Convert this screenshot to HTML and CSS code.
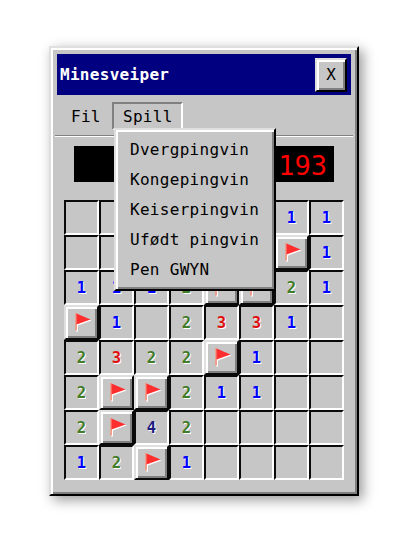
FILE: index.html
```
<!DOCTYPE html>
<html lang="no">
<head>
<meta charset="utf-8">
<title>Minesveiper</title>
<link rel="stylesheet" href="styles.css">
</head>
<body>
<main class="window raised">
  <header class="titlebar"><h1>Minesveiper</h1><button class="close raised">X</button></header>
  <nav class="menubar">
    <div class="menu">Fil</div>
    <div class="menu open">Spill
      <ul class="dropdown raised">
        <li>Dvergpingvin</li><li>Kongepingvin</li><li>Keiserpingvin</li><li>Ufødt pingvin</li><li>Pen GWYN</li>
      </ul>
    </div>
  </nav>
  <div class="display">193</div>
  <div class="board" id="board"></div>
</main>
<script src="board.js"></script>
</body>
</html>
```
FILE: styles.css
```
* { box-sizing: border-box; }
body {
  margin: 0;
  min-height: 559px;
  padding: 46px 0 0 49px;
  background: #fff;
  color: #000;
  font: 16px/30px "DejaVu Sans Mono", monospace;
}
.raised {
  background: #c6c6c6;
  border: 2px solid;
  border-color: #dfdfdf #000 #000 #dfdfdf;
  box-shadow: inset 2px 2px #fff, inset -2px -2px #808080;
}
.window {
  width: 310px;
  height: 450px;
  padding: 6px 4px;
  box-shadow: inset 2px 2px #fff, inset -2px -2px #808080, 4px 4px 12px rgba(0, 0, 0, .4);
}
.titlebar {
  display: flex;
  align-items: center;
  justify-content: space-between;
  height: 41px;
  margin: 0 2px;
  padding: 0 4px 0 3px;
  background: #000080;
  color: #fff;
}
h1 { margin: 0; font-size: 16px; letter-spacing: .3px; }
.close {
  width: 32px;
  height: 34px;
  padding: 0;
  font: 16px "DejaVu Sans Mono", monospace;
}
.menubar {
  display: flex;
  height: 42px;
  padding-top: 7px;
  border-bottom: 1px solid #fff;
  box-shadow: inset 0 -1px #808080;
  letter-spacing: .3px;
}
.menu { height: 28px; padding: 0 14px 0 16px; line-height: 29px; }
.menu:first-child { width: 57px; white-space: nowrap; }
.open {
  position: relative;
  width: 71px;
  padding: 0 9px;
  border: 2px solid;
  border-color: #808080 #fff #fff #808080;
  line-height: 25px;
}
.dropdown {
  position: absolute;
  z-index: 2;
  top: 24px;
  left: 0;
  width: 162px;
  height: 163px;
  margin: 0;
  padding: 5px 14px;
  list-style: none;
  line-height: 30px;
  white-space: nowrap;
}
.display {
  width: 260px;
  height: 36px;
  margin: 9px 0 18px 19px;
  padding-right: 7px;
  background: #000;
  color: #f00;
  font-size: 27px;
  line-height: 39px;
  text-align: right;
}
.board {
  display: grid;
  grid-template-columns: repeat(8, 35px);
  grid-auto-rows: 35px;
  margin-left: 9px;
}
.cell {
  border: 2px solid;
  border-color: #0a0a0a #fff #fff #0a0a0a;
  font-size: 15.5px;
  font-weight: bold;
  line-height: 32px;
  text-align: center;
  text-shadow: 1px 1px #fff;
}
.cell.raised { border-color: #dfdfdf #0a0a0a #0a0a0a #dfdfdf; }
.n1 { color: #0000ff; }
.n2 { color: #417c27; }
.n3 { color: #e01010; }
.n4 { color: #1e1e80; }
.cell svg { display: block; width: 31px; height: 31px; }
```
FILE: board.js
```
const rows = [
  "......11",
  "......F1",
  "1112FF21",
  "F1.2331.",
  "2322F1..",
  "2FF211..",
  "2F42....",
  "12F1...."
];
const flag = '<svg viewBox="0 0 31 31"><path d="M10 7h2v17.5h-2zM12 8l13.5 5.5L12 18.5z" fill="#fff"/><path d="M9 6h2v17.5H9z" fill="#ee9e8c"/><path d="M10.5 6.5l14 6-14 5z" fill="#ff2e2e"/></svg>';
const board = document.getElementById("board");
for (const mark of rows.join("")) {
  const cell = document.createElement("div");
  cell.className = "cell";
  if (mark === "F") {
    cell.classList.add("raised");
    cell.innerHTML = flag;
  } else if (mark !== ".") {
    cell.classList.add("n" + mark);
    cell.textContent = mark;
  }
  board.append(cell);
}
```
